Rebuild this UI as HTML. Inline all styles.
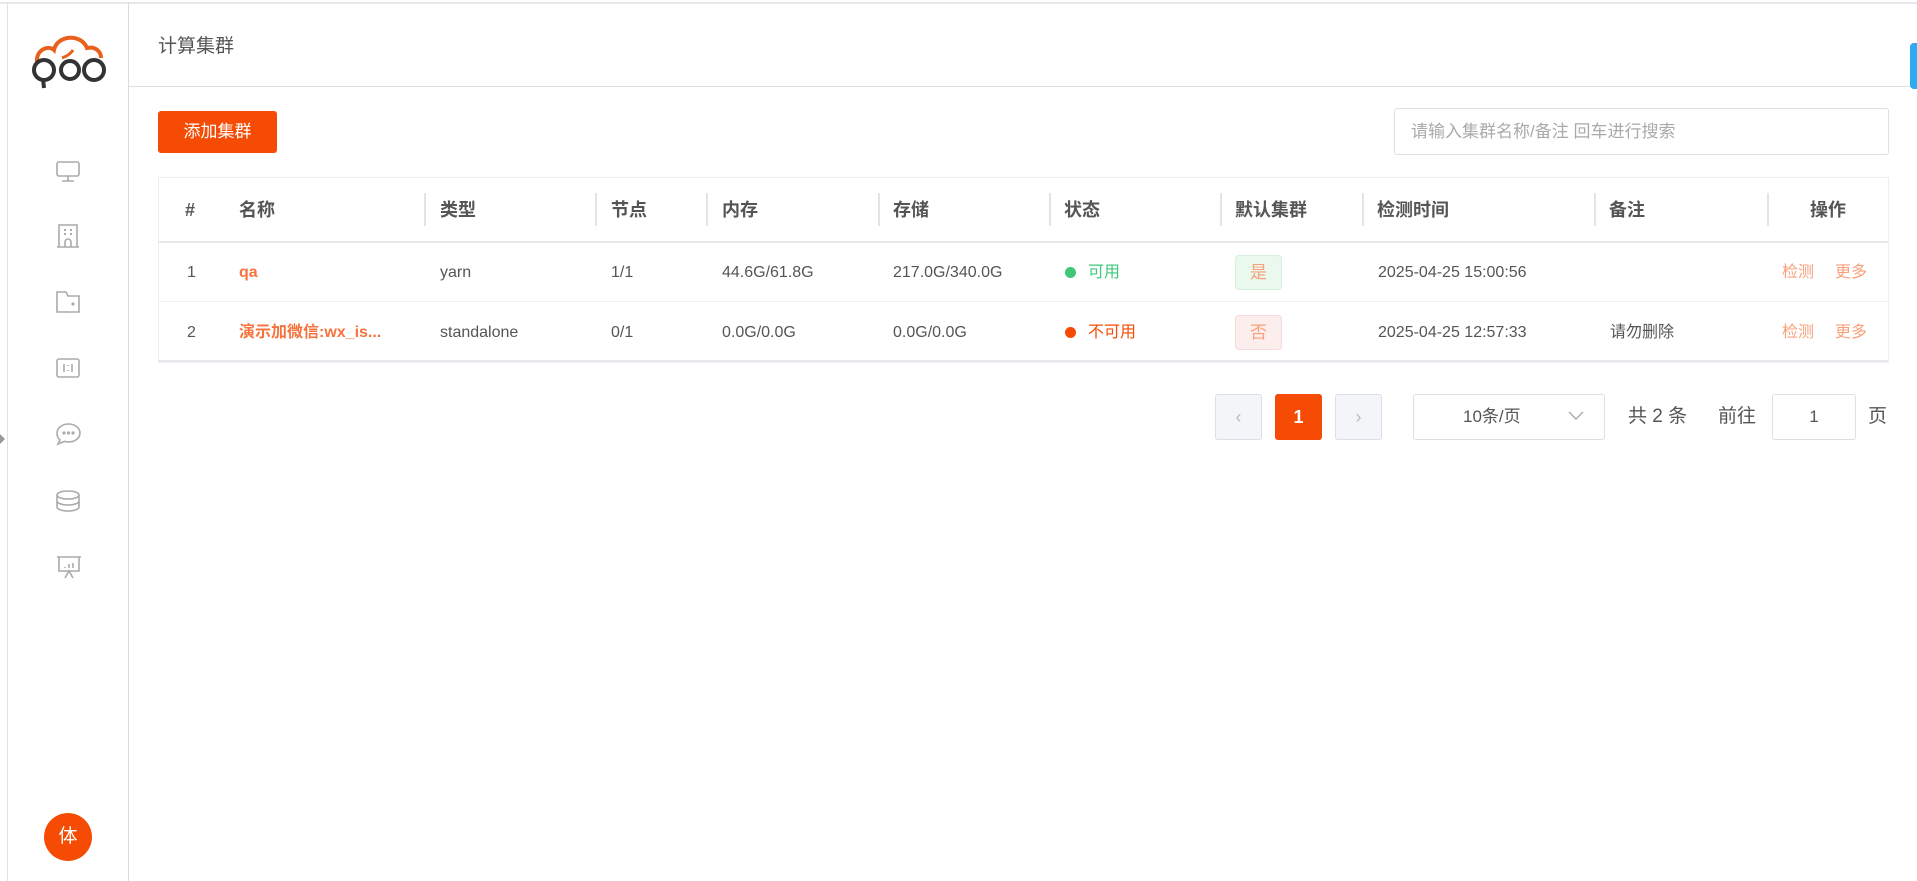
<!DOCTYPE html>
<html><head><meta charset="utf-8"><style>
*{box-sizing:border-box;margin:0;padding:0}
body{width:1917px;height:881px;overflow:hidden;background:#fff;font-family:"Liberation Sans","Noto Sans CJK SC",sans-serif;color:#555;position:relative}
.abs{position:absolute}
.th{position:absolute;top:199px;font-size:18px;line-height:22px;height:22px;font-weight:bold;color:#555;white-space:nowrap}
.sep{position:absolute;top:193px;width:2px;height:33px;background:#e4e4e4}
.td{position:absolute;font-size:16px;line-height:20px;height:20px;color:#555;white-space:nowrap}
.r1{top:263px}.r2{top:323px}
.org{color:#f7733e;font-weight:bold}
.lnk{color:#f9a07a}
.ic{position:absolute;left:56px}
</style></head><body>
<div class="abs" style="left:0;top:2px;width:1917px;height:2px;background:#e8e8ec"></div>
<div class="abs" style="left:7px;top:2px;width:1px;height:879px;background:#e0e0e6"></div>
<div class="abs" style="left:128px;top:2px;width:1px;height:879px;background:#d8dbe4"></div>
<div class="abs" style="left:0;top:434px;width:0;height:0;border-top:5px solid transparent;border-bottom:5px solid transparent;border-left:5px solid #999"></div>
<svg class="abs" style="left:20px;top:30px" width="100" height="70" viewBox="20 30 100 70">
<path d="M37 62 C36 49 49 45 54 50 C57 35 81 33 87 48 C96 46 101 52 101 58" fill="none" stroke="#e8601c" stroke-width="4"/>
<path d="M62 58 Q70 55 73 50" fill="none" stroke="#e8601c" stroke-width="3"/>
<circle cx="44" cy="70" r="10" fill="none" stroke="#333" stroke-width="4"/>
<path d="M43 79 L44 88" stroke="#333" stroke-width="4"/>
<circle cx="70" cy="70" r="9" fill="none" stroke="#333" stroke-width="4"/>
<circle cx="94" cy="70" r="10" fill="none" stroke="#333" stroke-width="4"/>
</svg>
<svg class="ic" style="top:161px" width="24" height="22" viewBox="0 0 24 22" fill="none" stroke="#aaa" stroke-width="1.6"><rect x="1" y="1" width="22" height="14" rx="2"/><path d="M12 15v5M6 20h12"/></svg>
<svg class="ic" style="top:224px" width="24" height="24" viewBox="0 0 24 24" fill="none" stroke="#aaa" stroke-width="1.6"><path d="M3 23V1h18v22M1 23h22M9 23v-5a3 3 0 0 1 6 0v5"/><path d="M8 6h2M14 6h2M8 10h2M14 10h2" stroke-width="2"/></svg>
<svg class="ic" style="top:291px" width="24" height="22" viewBox="0 0 24 22" fill="none" stroke="#aaa" stroke-width="1.6"><path d="M1 21V1h9l2 4h11v16z"/><circle cx="17" cy="13" r=".8" fill="#aaa"/></svg>
<svg class="ic" style="top:358px" width="24" height="20" viewBox="0 0 24 20" fill="none" stroke="#aaa" stroke-width="1.6"><rect x="1" y="1" width="22" height="18" rx="2"/><path d="M8 6v8M16 6v8M12 7v1M12 12v1"/></svg>
<svg class="ic" style="top:423px" width="25" height="23" viewBox="0 0 25 23" fill="none" stroke="#aaa" stroke-width="1.6"><path d="M12.5 1C19 1 24 5 24 10s-5 9-11.5 9c-1.5 0-3-.2-4-.6L2 21l2-4C2 15.5 1 13 1 10 1 5 6 1 12.5 1z"/><circle cx="8" cy="10" r=".8" fill="#aaa"/><circle cx="12.5" cy="10" r=".8" fill="#aaa"/><circle cx="17" cy="10" r=".8" fill="#aaa"/></svg>
<svg class="ic" style="top:490px" width="24" height="23" viewBox="0 0 24 23" fill="none" stroke="#aaa" stroke-width="1.6"><ellipse cx="12" cy="5" rx="11" ry="4"/><path d="M1 5v12c0 2.2 5 4 11 4s11-1.8 11-4V5M1 11c0 2.2 5 4 11 4s11-1.8 11-4"/></svg>
<svg class="ic" style="top:556px" width="26" height="23" viewBox="0 0 26 23" fill="none" stroke="#aaa" stroke-width="1.6"><path d="M1 1h24M3 1v14h20V1M9 22l4-7 4 7M9 11v1M13 8v4M17 7v5"/></svg>
<div class="abs" style="left:44px;top:813px;width:48px;height:48px;border-radius:50%;background:#f54b04;color:#fff;font-size:19px;text-align:center;line-height:48px">体</div>

<div class="abs" style="left:129px;top:86px;width:1788px;height:1px;background:#dcdfe6"></div>
<div class="abs" style="left:158px;top:35px;font-size:19px;line-height:24px;color:#555">计算集群</div>
<div class="abs" style="left:1910px;top:43px;width:7px;height:46px;border-radius:4px 0 0 4px;background:#2eaaf0"></div>

<div class="abs" style="left:158px;top:111px;width:119px;height:42px;background:#f54b04;border-radius:3px;color:#fff;font-size:17px;text-align:center;line-height:42px">添加集群</div>
<div class="abs" style="left:1394px;top:108px;width:495px;height:47px;border:1px solid #dcdfe6;border-radius:3px;color:#aaa;font-size:17px;line-height:45px;padding-left:16px">请输入集群名称/备注 回车进行搜索</div>

<div class="abs" style="left:158px;top:177px;width:1731px;height:186px;border:1px solid #ebeef5"></div>
<div class="abs" style="left:159px;top:241px;width:1729px;height:2px;background:#e9e9ec"></div>
<div class="abs" style="left:159px;top:301px;width:1729px;height:1px;background:#ebeef5"></div>
<div class="abs" style="left:159px;top:360px;width:1729px;height:2px;background:#e9e9ec"></div>
<div class="sep" style="left:424px"></div><div class="sep" style="left:595px"></div><div class="sep" style="left:706px"></div><div class="sep" style="left:878px"></div><div class="sep" style="left:1049px"></div><div class="sep" style="left:1220px"></div><div class="sep" style="left:1362px"></div><div class="sep" style="left:1594px"></div><div class="sep" style="left:1767px"></div>
<div class="th" style="left:185px">#</div>
<div class="th" style="left:239px">名称</div>
<div class="th" style="left:440px">类型</div>
<div class="th" style="left:611px">节点</div>
<div class="th" style="left:722px">内存</div>
<div class="th" style="left:893px">存储</div>
<div class="th" style="left:1064px">状态</div>
<div class="th" style="left:1235px">默认集群</div>
<div class="th" style="left:1377px">检测时间</div>
<div class="th" style="left:1609px">备注</div>
<div class="th" style="left:1810px">操作</div>

<div class="td r1" style="left:187px">1</div>
<div class="td r1 org" style="left:239px">qa</div>
<div class="td r1" style="left:440px">yarn</div>
<div class="td r1" style="left:611px">1/1</div>
<div class="td r1" style="left:722px">44.6G/61.8G</div>
<div class="td r1" style="left:893px">217.0G/340.0G</div>
<div class="abs" style="left:1065px;top:267px;width:11px;height:11px;border-radius:50%;background:#3ec878"></div>
<div class="td r1" style="left:1088px;color:#3ec878">可用</div>
<div class="abs" style="left:1235px;top:255px;width:47px;height:35px;border:1px solid #d4f0dd;background:#eaf8ee;border-radius:4px;color:#f9a07a;font-size:17px;text-align:center;line-height:33px">是</div>
<div class="td r1" style="left:1378px">2025-04-25 15:00:56</div>
<div class="td r1 lnk" style="left:1782px">检测</div>
<div class="td r1 lnk" style="left:1835px">更多</div>

<div class="td r2" style="left:187px">2</div>
<div class="td r2 org" style="left:239px">演示加微信:wx_is...</div>
<div class="td r2" style="left:440px">standalone</div>
<div class="td r2" style="left:611px">0/1</div>
<div class="td r2" style="left:722px">0.0G/0.0G</div>
<div class="td r2" style="left:893px">0.0G/0.0G</div>
<div class="abs" style="left:1065px;top:327px;width:11px;height:11px;border-radius:50%;background:#f54b04"></div>
<div class="td r2" style="left:1088px;color:#f54b04">不可用</div>
<div class="abs" style="left:1235px;top:315px;width:47px;height:35px;border:1px solid #f8d8d8;background:#fdeeee;border-radius:4px;color:#f9a07a;font-size:17px;text-align:center;line-height:33px">否</div>
<div class="td r2" style="left:1378px">2025-04-25 12:57:33</div>
<div class="td r2" style="left:1610px">请勿删除</div>
<div class="td r2 lnk" style="left:1782px">检测</div>
<div class="td r2 lnk" style="left:1835px">更多</div>

<div class="abs" style="left:1215px;top:394px;width:47px;height:46px;border:1px solid #dcdfe6;background:#f4f5f8;border-radius:3px;color:#bbb;text-align:center;line-height:44px;font-size:18px">‹</div>
<div class="abs" style="left:1275px;top:394px;width:47px;height:46px;background:#f54b04;border-radius:3px;color:#fff;text-align:center;line-height:46px;font-size:18px;font-weight:bold">1</div>
<div class="abs" style="left:1335px;top:394px;width:47px;height:46px;border:1px solid #dcdfe6;background:#f4f5f8;border-radius:3px;color:#bbb;text-align:center;line-height:44px;font-size:18px">›</div>
<div class="abs" style="left:1413px;top:394px;width:192px;height:46px;border:1px solid #dcdfe6;border-radius:3px;font-size:17px;line-height:44px;padding-left:49px;color:#555">10条/页</div>
<svg class="abs" style="left:1568px;top:411px" width="16" height="10" viewBox="0 0 16 10" fill="none" stroke="#aaa" stroke-width="1.4"><path d="M1 1l7 7 7-7"/></svg>
<div class="abs" style="left:1628px;top:405px;font-size:19px;line-height:24px;color:#555">共 2 条</div>
<div class="abs" style="left:1718px;top:405px;font-size:19px;line-height:24px;color:#555">前往</div>
<div class="abs" style="left:1772px;top:394px;width:84px;height:46px;border:1px solid #dcdfe6;border-radius:3px;text-align:center;line-height:44px;font-size:17px">1</div>
<div class="abs" style="left:1868px;top:405px;font-size:19px;line-height:24px;color:#555">页</div>
</body></html>
